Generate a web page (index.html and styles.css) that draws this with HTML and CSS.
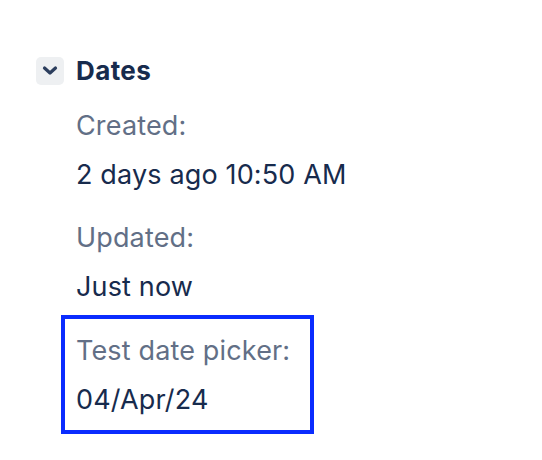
FILE: index.html
```html
<!DOCTYPE html>
<html>
<head>
<meta charset="utf-8">
<link rel="stylesheet" href="styles.css">
</head>
<body>
<div class="panel">
  <div class="header">
    <button class="toggle" type="button">
      <svg width="28" height="28" viewBox="0 0 28 28"><polyline points="8.5,11 14,16 19.5,11" fill="none" stroke="#2c3e5d" stroke-width="3.2" stroke-linecap="round" stroke-linejoin="round"/></svg>
    </button>
    <h2 class="title">Dates</h2>
  </div>
  <div class="fields">
    <div class="field">
      <div class="label">Created:</div>
      <div class="value">2 days ago 10:50 AM</div>
    </div>
    <div class="field">
      <div class="label">Updated:</div>
      <div class="value">Just now</div>
    </div>
    <div class="field highlight">
      <div class="label">Test date picker:</div>
      <div class="value">04/Apr/24</div>
    </div>
  </div>
</div>
</body>
</html>
```
FILE: styles.css
```css
html, body {
  margin: 0;
  padding: 0;
  background: #ffffff;
}
body {
  font-family: Inter, "Noto Sans", sans-serif;
  color: #172b4d;
}
.panel {
  padding: 57px 0 0 36px;
}
.header {
  display: flex;
  align-items: center;
  gap: 12px;
  height: 28px;
}
.toggle {
  width: 28px;
  height: 28px;
  padding: 0;
  border: none;
  border-radius: 5px;
  background: #eef0f2;
  display: flex;
  align-items: center;
  justify-content: center;
}
.toggle svg {
  display: block;
}
.title {
  margin: 0;
  font-size: 26px;
  font-weight: 700;
  letter-spacing: 0.4px;
  line-height: 28px;
  color: #172b4d;
}
.fields {
  margin-left: 40px;
  padding-top: 25px;
}
.field {
  font-size: 27px;
  letter-spacing: 0.15px;
  line-height: 32px;
  margin-bottom: 31px;
}
.label {
  color: #626f86;
}
.value {
  margin-top: 17px;
  color: #172b4d;
}
.field.highlight {
  box-sizing: border-box;
  width: 253px;
  margin: -19px 0 0 -15px;
  padding: 16px 10px 14px 11px;
  border: 4px solid #0a2cff;
}
```
